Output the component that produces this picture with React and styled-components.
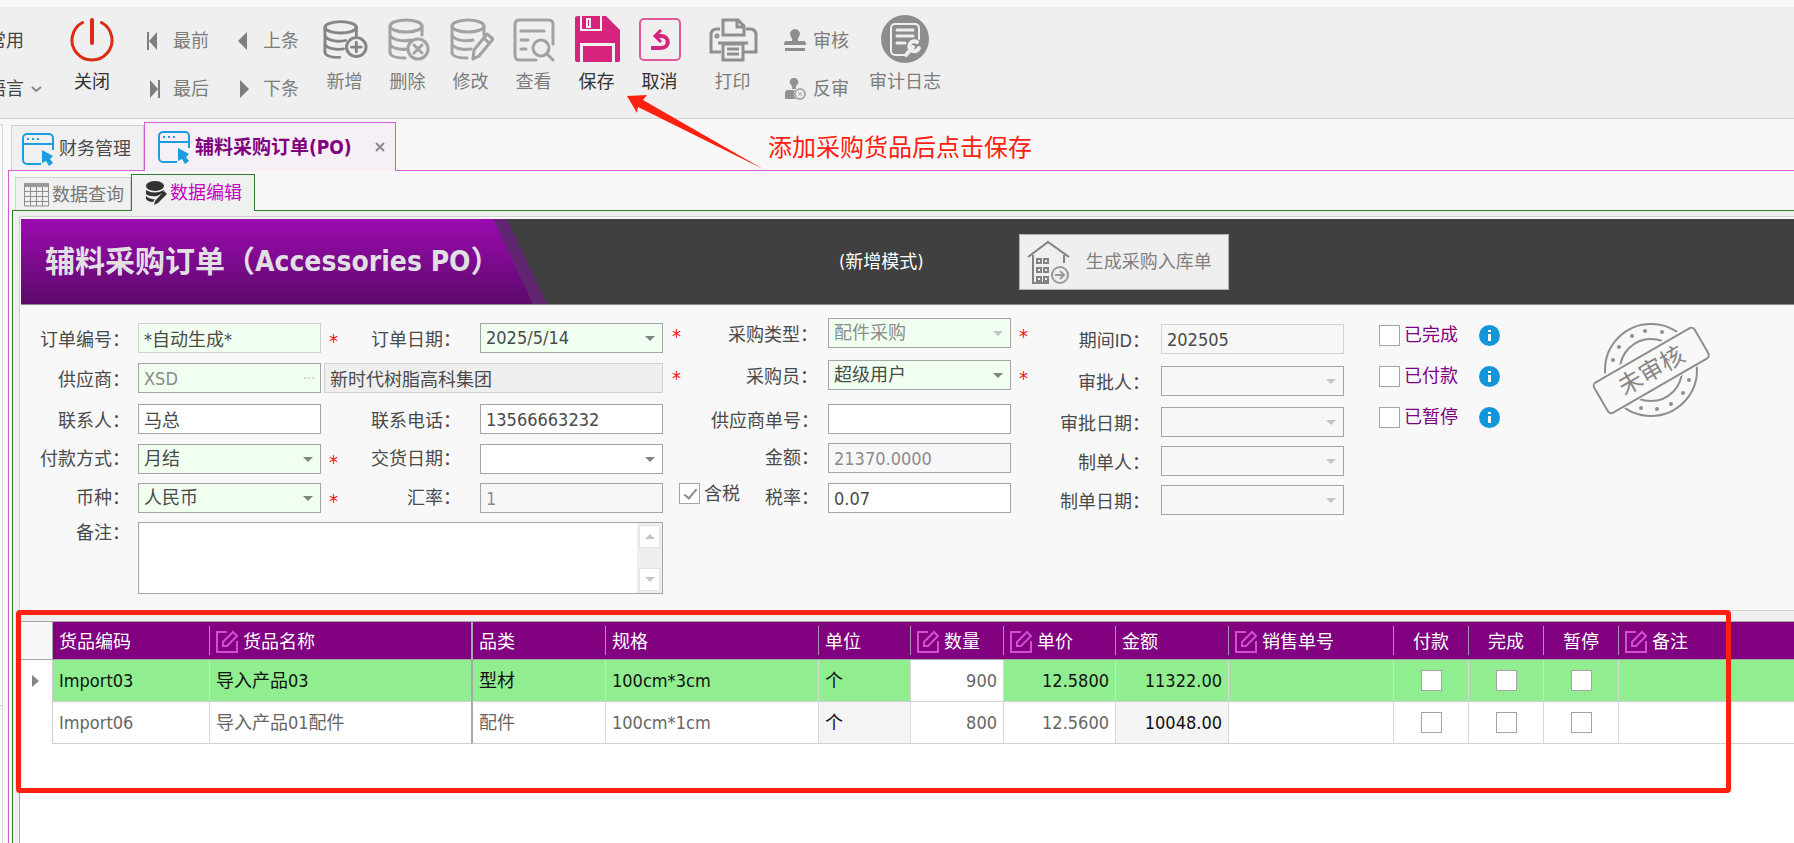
import styled, { createGlobalStyle, css } from 'styled-components';

const GlobalStyle = createGlobalStyle`
    * {
        box-sizing: border-box;
    }

    body {
        margin: 0;
        background: #f8f8f8;
    }

    body, button, input, select, textarea {
        font-family: "DejaVu Sans Condensed", "Noto Sans CJK SC", sans-serif;
        font-size: 18px;
        line-height: 20px;
        color: #4a4a4a;
    }

    button {
        padding: 0;
        border: 0;
        background: none;
    }
`

const Page = styled.div`
    position: relative;
    display: flex;
    flex-direction: column;
    min-height: 100vh;
    overflow: hidden;
`

/* ---------- toolbar ---------- */

const Toolbar = styled.header`
    display: flex;
    align-items: flex-start;
    height: 112px;
    margin-top: 7px;
    padding-top: 8px;
    background: #efefef;
    border-bottom: 1px solid #d0d0d0;
    white-space: nowrap;
`

const ToolColumn = styled.div`
    display: grid;
    grid-template-rows: 48px 48px;
    align-items: center;
    padding-top: 2px;
    flex: none;
    width: ${props => props.$width}px;
    margin-left: ${props => props.$before || 0}px;
`

const SmallTool = styled.button`
    display: flex;
    align-items: center;
    gap: ${props => props.$gap || 0}px;
    color: ${props => props.$active ? '#444' : '#7c7c7c'};

    svg {
        flex: none;
    }
`

const BigTool = styled.button`
    display: flex;
    flex-direction: column;
    align-items: center;
    gap: 9px;
    flex: none;
    width: ${props => props.$width || 63}px;
    margin-left: ${props => props.$before || 0}px;
    color: ${props => props.$active ? '#333' : '#7c7c7c'};

    svg {
        display: block;
        height: 48px;
    }
`

/* ---------- tabs ---------- */

const Body = styled.div`
    display: flex;
    flex: 1;
`

const LeftRail = styled.div`
    flex: none;
    width: 3px;
    margin: 5px 5px 0 0;
    border: 1px solid #d8d8d8;
    border-width: 1px 1px 0 0;

    &::before {
        content: '';
        display: block;
        height: 580px;
        border-bottom: 1px solid #d0d0d0;
    }
`

const Workspace = styled.main`
    display: flex;
    flex-direction: column;
    flex: 1;
    min-width: 0;
`

const TabBar = styled.nav`
    display: flex;
    align-items: flex-end;
    height: 51px;
    padding-left: 3px;
`

const Tab = styled.button`
    display: flex;
    align-items: center;
    gap: 5px;
    height: 45px;
    width: 133px;
    padding: 2px 0 0 9px;
    background: #f0f0f0;
    border: 1px solid #d0d0d0;
    border-bottom: 0;
    white-space: nowrap;

    ${props => props.$active && css`
        position: relative;
        height: 49px;
        width: 252px;
        margin-bottom: -1px;
        padding: 0 10px 0 12px;
        background: #f6f0f6;
        border-color: #d25fd2;
        color: #800080;
        font-size: 19px;
        font-weight: bold;
    `}
`

const CloseMark = styled.svg`
    margin-left: auto;
`

const TabPanel = styled.div`
    display: flex;
    flex-direction: column;
    flex: 1;
    padding-left: 3px;
    border: 1px solid #d25fd2;
    border-width: 1px 0 0 1px;
`

const SubTabBar = styled(TabBar)`
    height: 39px;
`

const SubTab = styled.button`
    display: flex;
    align-items: center;
    gap: 3px;
    height: 33px;
    width: 116px;
    padding: 1px 0 0 8px;
    background: #f0f0f0;
    border: 1px solid #d0d0d0;
    border-bottom: 0;
    color: #777;
    white-space: nowrap;

    ${props => props.$active && css`
        position: relative;
        height: 37px;
        width: 124px;
        margin-bottom: -1px;
        padding: 0 0 0 13px;
        background: #eef1ee;
        border-color: #2e7d32;
        color: #c800c8;
    `}
`

const SubPanel = styled.div`
    display: flex;
    flex-direction: column;
    flex: 1;
    padding: 5px 0 0 6px;
    background: #eef0ee;
    border: 1px solid #2e7d32;
    border-width: 1px 0 0 1px;
`

/* ---------- order form ---------- */

const FormPanel = styled.form`
    height: 395px;
    padding: 2px 0 0 1px;
    background: #f8f8f8;
    border: 1px solid #d0d0d0;
    border-right: 0;
`

const Banner = styled.div`
    display: flex;
    align-items: center;
    height: 86px;
    background: #404040;
    border-bottom: 1px solid #8a8a8a;
`

const TitlePlate = styled.div`
    flex: none;
    width: 526px;
    height: 100%;
    background: #602672;
    clip-path: polygon(0 0, calc(100% - 40px) 0, 100% 100%, 0 100%);
`

const Title = styled.h1`
    display: flex;
    align-items: center;
    width: 512px;
    height: 100%;
    margin: 0;
    padding-left: 24px;
    background: linear-gradient(#9b0bb0, #5c0a6a);
    clip-path: polygon(0 0, calc(100% - 40px) 0, 100% 100%, 0 100%);
    color: #e2dfe4;
    font-size: 30px;
    line-height: 40px;
    white-space: nowrap;

    span {
        font-size: 28px;
    }
`

const Mode = styled.span`
    margin-left: 292px;
    color: #fff;
    white-space: nowrap;
`

const StockInButton = styled.button`
    display: flex;
    align-items: center;
    gap: 16px;
    height: 56px;
    width: 210px;
    margin-left: 95px;
    padding-left: 7px;
    background: #efefef;
    border: 1px solid #b0b0b0;
    color: #808080;
    white-space: nowrap;
`

const FormBody = styled.div`
    display: flex;
    align-items: flex-start;
    white-space: nowrap;
`

const FieldGrid = styled.div`
    display: grid;
    flex: none;
    align-items: start;
    grid-template-columns: ${props => props.$columns};
    grid-template-rows: ${props => props.$rows};
    padding-top: ${props => props.$top}px;
`

const LabelCell = styled.div`
    display: flex;
    align-items: flex-start;
    justify-content: space-between;
    padding: 0 ${props => props.$after || 8}px 0 ${props => props.$before || 0}px;

    & > :only-child {
        margin-left: auto;
    }
`

const Label = styled.label`
    line-height: ${props => props.$line || 34}px;
`

const Required = styled.span`
    color: #ff1010;
    font-size: 20px;
    line-height: 36px;
`

const fieldBox = css`
    width: 100%;
    height: 30px;
    margin: 0;
    padding: 0 5px;
    border: 1px solid ${props => props.$soft ? '#d2d2d2' : '#a4a4a4'};
    border-radius: 0;
    background: ${props => props.$bg || '#fff'};
    color: ${props => props.$dim ? '#8c8c8c' : '#4a4a4a'};
    opacity: 1;
    outline: none;
`

const Input = styled.input`
    ${fieldBox}
`

const SelectBox = styled.div`
    position: relative;
    height: 30px;

    svg {
        position: absolute;
        right: 8px;
        top: 13px;
        pointer-events: none;
    }
`

const NativeSelect = styled.select`
    ${fieldBox}
    appearance: none;
`

const LookupBox = styled.div`
    position: relative;
    height: 30px;
`

const LookupButton = styled.button`
    position: absolute;
    right: 6px;
    top: 5px;
    color: #b8c4b8;
    font-size: 14px;
`

const SupplierName = styled.div`
    grid-column: 3 / 5;
    padding-left: 3px;
`

const Memo = styled.div`
    display: flex;
    grid-column: 2 / 5;
    height: 72px;
    background: #fff;
    border: 1px solid #a4a4a4;

    textarea {
        flex: 1;
        border: 0;
        padding: 4px 5px;
        resize: none;
        outline: none;
        background: transparent;
    }
`

const ScrollRail = styled.div`
    display: flex;
    flex-direction: column;
    justify-content: space-between;
    width: 25px;
    padding: 2px;
    background: #efefef;

    button {
        display: flex;
        align-items: center;
        justify-content: center;
        height: 23px;
        background: #fff;
        border: 1px solid #e3e3e3;
    }
`

const CheckInput = styled.input`
    appearance: none;
    position: relative;
    flex: none;
    width: 21px;
    height: 21px;
    margin: 0;
    background: #fff;
    border: 1px solid #a4a4a4;

    &:checked::after {
        content: '';
        position: absolute;
        left: 7px;
        top: 2px;
        width: 5px;
        height: 11px;
        border: solid #8a8a8a;
        border-width: 0 2px 2px 0;
        transform: rotate(40deg);
    }
`

const CheckLabel = styled.label`
    display: flex;
    align-items: center;
    gap: 4px;
    color: ${props => props.$color || '#4a4a4a'};
`

const StateList = styled.div`
    display: flex;
    flex-direction: column;
    gap: 19px;
    padding: 19px 0 0 35px;
`

const StateRow = styled.div`
    display: flex;
    align-items: center;
    gap: 21px;
    height: 22px;
`

const StampBox = styled.div`
    padding: 16px 0 0 90px;
`

/* ---------- goods grid ---------- */

const Splitter = styled.div`
    height: 10px;
    background: #efefef;
`

const GoodsPanel = styled.section`
    position: relative;
    flex: 1;
    background: #fff;
    border: 1px solid #a8a8a8;
    border-width: 1px 0 0 1px;
`

const Goods = styled.table`
    width: 100%;
    table-layout: fixed;
    border-collapse: separate;
    border-spacing: 0;
    white-space: nowrap;
`

const Head = styled.th`
    height: 38px;
    padding: 0;
    background: #800080;
    border-left: ${props => props.$split ? '2px solid #a8a8a8' : '0'};
    border-bottom: 1px solid #a8a8a8;
    color: #fff;
    font-weight: normal;
`

const HeadInner = styled.div`
    display: flex;
    align-items: center;
    justify-content: ${props => props.$center ? 'center' : 'flex-start'};
    gap: 4px;
    height: 29px;
    padding: 2px 0 0 6px;
    border-left: ${props => props.$line ? '1px solid #b090b0' : '0'};
    ${props => props.$center && 'padding-left: 0;'}
`

const Corner = styled.th`
    padding: 0;
    background: #f8f8f8;
    border: 1px solid #a8a8a8;
    border-width: 0 1px 1px 0;
`

const Marker = styled.td`
    height: 42px;
    padding: 0 0 0 12px;
    border-right: 1px solid #d0d0d0;
`

const Cell = styled.td`
    height: 42px;
    padding: 0 6px;
    text-align: ${props => props.$align || 'left'};
    border-bottom: 1px solid #d0d0d0;
    border-left: ${props => props.$split ? '2px solid #a8a8a8' : props.$first ? '0' : '1px solid #d8d8d8'};
    background: ${props => props.$bg};
    color: ${props => props.$color};

    ${CheckInput} {
        display: block;
        margin: 0 auto;
    }
`

/* ---------- notes drawn over the screen ---------- */

const NoteFrame = styled.div`
    position: absolute;
    top: -12px;
    left: -4px;
    right: 63px;
    height: 183px;
    border: 5px solid #ff2010;
    border-radius: 4px;
    pointer-events: none;
`

const NoteArrow = styled.svg`
    position: absolute;
    left: 627px;
    top: 95px;
    pointer-events: none;
`

const NoteText = styled.span`
    position: absolute;
    left: 768px;
    top: 133px;
    color: #ff2010;
    font-size: 24px;
    line-height: 30px;
    white-space: nowrap;
`

/* ---------- icons ---------- */

const PowerIcon = () => (
    <svg width="44" height="48" viewBox="0 0 44 48" fill="none" stroke="#dc2a14" strokeWidth="3" strokeLinecap="round">
        <path d="M12.5 7.5A20 20 0 1 0 31.5 7.5" />
        <path d="M22 5v23" strokeWidth="4" />
    </svg>
)

const StepIcon = ({ next, bar }) => (
    <svg width="14" height="20" viewBox="0 0 14 20" fill="#7e7e7e" overflow="visible">
        <g transform={next ? 'translate(17 0) scale(-1 1)' : undefined}>
            {bar && <path d="M2 1h2v18H2z" />}
            <path d={bar ? 'M12 1v18L4 10z' : 'M12 1v18L3 10z'} />
        </g>
    </svg>
)

const Cylinder = ({ children, light, transform }) => (
    <svg width="46" height="48" viewBox="0 0 46 48" fill="none" stroke={light ? '#a2a2a2' : '#858585'} strokeWidth="3" strokeLinecap="round">
        <g transform={transform}>
            <ellipse cx="18" cy="11" rx="16" ry="6" />
            <path d="M2 11v27c1 4 9 5 15 5M34 11v9M2 20c2 5 13 7 21 5M2 29c2 5 12 6 19 5" />
            {children}
        </g>
    </svg>
)

const AddIcon = () => (
    <Cylinder transform="translate(1 2) scale(0.98 0.94)">
        <circle cx="34" cy="32" r="10" fill="#efefef" />
        <path d="M34 27v10M29 32h10" />
    </Cylinder>
)

const DeleteIcon = () => (
    <Cylinder light transform="translate(3 0)">
        <circle cx="30" cy="34" r="10" fill="#efefef" />
        <path d="M26 30l8 8M34 30l-8 8" />
    </Cylinder>
)

const EditIcon = () => (
    <Cylinder light transform="translate(2 0)">
        <path d="M23 44l1-9 13-16 6 5-14 17z" fill="#efefef" strokeLinejoin="round" />
        <path d="M34 23l5 5" />
    </Cylinder>
)

const ViewIcon = () => (
    <svg width="42" height="48" viewBox="0 0 42 48" fill="none" stroke="#a2a2a2" strokeWidth="3" strokeLinecap="round">
        <path d="M23 45H6a4 4 0 0 1-4-4V9a4 4 0 0 1 4-4h30a4 4 0 0 1 4 4v20" />
        <path d="M8 16h23M8 25h7M8 34h5" />
        <circle cx="28" cy="33" r="8" />
        <path d="M34 39l6 6" />
    </svg>
)

const SaveIcon = () => (
    <svg width="46" height="48" viewBox="0 0 46 48" fill="#d6247d">
        <path d="M1 3q0-2 3-2h2v15h22V1h4l14 14v31q0 1-2 1h-3V28H6v19H3q-2 0-2-2z" />
        <path d="M8 1h18v13H8zM9 31h29v16H9z" />
        <path d="M13 4h3v8h-3z" fill="none" stroke="#efefef" strokeWidth="2" />
    </svg>
)

const CancelIcon = () => (
    <svg width="44" height="48" viewBox="0 0 44 48" fill="none" stroke="#e0589a" strokeWidth="2">
        <rect x="2" y="4" width="40" height="41" rx="4" />
        <path d="M13 33h10c9 0 9-12 0-12h-5" stroke="#d6247d" strokeWidth="4" />
        <path d="M23 15l-6 6 6 6" stroke="#d6247d" strokeWidth="3" />
    </svg>
)

const PrintIcon = () => (
    <svg width="50" height="48" viewBox="0 0 50 48" fill="none" stroke="#8f8f8f" strokeWidth="3">
        <path d="M13 37H3V20q0-6 6-6h3M38 14h4q6 0 6 6v17H36" />
        <path d="M15 20V5h15l6 6v9zM29 5v7h7" />
        <path d="M15 45V29h20v16zM10 28h30M19 34h12M19 39h12" />
        <circle cx="9" cy="21" r="1" />
    </svg>
)

const StampIcon = () => (
    <svg width="24" height="24" viewBox="0 0 24 24" fill="#8e8e8e">
        <path d="M12 0a5 5 0 0 1 4 8q-2 2-1 4h6q2 0 2 4H1q0-4 2-4h6q1-2-1-4a5 5 0 0 1 4-8zM2 19h20v3H2z" />
    </svg>
)

const UnstampIcon = () => (
    <svg width="24" height="24" viewBox="0 0 24 24" fill="#929292">
        <path d="M11 1a4 4 0 0 1 3 7q-2 2-1 4h-4q1-2-1-4a4 4 0 0 1 3-7zM2 16q0-3 3-3h7a7 7 0 0 0 1 9H2z" />
        <circle cx="17" cy="17" r="5" fill="none" stroke="#a8a8a8" strokeWidth="2" />
        <path d="M15 15l4 4M19 15l-4 4" stroke="#a8a8a8" strokeWidth="1" />
    </svg>
)

const AuditLogIcon = () => (
    <svg width="48" height="48" viewBox="0 0 48 48" fill="none" stroke="#efefef" strokeWidth="2" strokeLinecap="round">
        <circle cx="24" cy="24" r="24" fill="#8d8d8d" stroke="none" />
        <path d="M23 40H14a4 4 0 0 1-4-4V13a4 4 0 0 1 4-4h20a4 4 0 0 1 4 4v11" />
        <path d="M16 15h16M16 21h16M16 28h8" strokeWidth="3" />
        <path d="M25 40l7-8" strokeWidth="4" />
        <path d="M36 27a5 5 0 1 0 2 6" strokeWidth="4" />
    </svg>
)

const WindowIcon = () => (
    <svg width="33" height="34" viewBox="0 0 33 34" fill="none" stroke="#1b9de0" strokeWidth="2">
        <path d="M20 32H6a4 4 0 0 1-4-4V6a4 4 0 0 1 4-4h22a4 4 0 0 1 4 4v12M2 12h30" />
        <path d="M6 7h2M11 7h2M16 7h2" />
        <path d="M21 18l11 6-3 3 3 4-4 3-3-5-4 2z" fill="#1b9de0" stroke="none" />
    </svg>
)

const GridIcon = () => (
    <svg width="25" height="24" viewBox="0 0 25 24" fill="none" stroke="#8f8f8f" strokeWidth="1">
        <path d="M0 0h25v4H0z" fill="#999" stroke="none" />
        <path d="M0.500 1v22h24V1M6.500 4v19M12.500 4v19M18.500 4v19M0 8.500h25M0 13.500h25M0 18.500h25" />
    </svg>
)

const DataEditIcon = () => (
    <svg width="22" height="25" viewBox="0 0 22 25" fill="#333">
        <ellipse cx="10" cy="5" rx="9" ry="5" />
        <path d="M1 9q8 5 18 0l-1 3-6 3Q4 16 1 13zM1 15q4 4 9 3l-2 3q-5 0-7-3z" />
        <path d="M10 20L19 10l3 3-9 9-4 2z" />
    </svg>
)

const WarehouseIcon = () => (
    <svg width="43" height="44" viewBox="0 0 43 44" fill="none" stroke="#828282" strokeWidth="2">
        <path d="M1 17L21 2l21 15" />
        <path d="M6 15v28h16M37 15v8" />
        <path d="M10 19h4v4h-4zM17 19h4v4h-4zM10 28h4v4h-4zM17 28h4v4h-4zM10 37h4v4h-4zM17 37h4v4h-4z" />
        <circle cx="33" cy="35" r="8" stroke="#999" />
        <path d="M28 35h9M33 31l4 4-4 4" stroke="#999" />
    </svg>
)

const InfoIcon = () => (
    <svg width="21" height="21" viewBox="0 0 21 21">
        <circle cx="10.500" cy="10.500" r="10.500" fill="#1296db" />
        <path d="M9 5h3v2H9zM9 9h3v7H9z" fill="#fff" />
    </svg>
)

const Caret = ({ dim, up }) => (
    <svg width="10" height="5" viewBox="0 0 10 5" fill={dim ? '#c4c4c4' : '#848484'}>
        <path d={up ? 'M0 5L5 0l5 5z' : 'M0 0h10L5 5z'} />
    </svg>
)

const PenIcon = () => (
    <svg width="23" height="23" viewBox="0 0 23 23" fill="none" stroke="#d050d0" strokeWidth="2">
        <path d="M11 2H1v20h20V11" />
        <path d="M7 16v-4L17 2l4 4-10 10z" />
    </svg>
)

const dots = [[-38, -10], [-32, -23], [-19, -34], [-6, -39], [11, -38], [38, 10], [32, 23], [20, 34], [6, 39], [-10, 38]]

const AuditStamp = () => (
    <svg width="122" height="98" viewBox="-61 -49 122 98" fill="none" stroke="#8e8e8e" strokeWidth="2">
        <circle r="46" />
        <circle r="31" />
        {dots.map(([x, y]) => <circle key={x} cx={x} cy={y} r="2" fill="#8e8e8e" stroke="none" />)}
        <g transform="rotate(-30)">
            <rect x="-61" y="-20" width="122" height="40" fill="#f8f8f8" stroke="none" />
            <rect x="-58" y="-17" width="116" height="35" rx="4" fill="#f8f8f8" />
            <text x="0" y="9" textAnchor="middle" fill="#8a8585" stroke="none" fontSize="24">未审核</text>
        </g>
    </svg>
)

/* ---------- parts ---------- */

const GREEN = '#f0fff0'
const GREY = '#f7f7f7'

function Select({ id, value, bg, dim, disabled }) {
    return (
        <SelectBox>
            <NativeSelect id={id} $bg={bg} $dim={dim} disabled={disabled} defaultValue={value}>
                <option>{value}</option>
            </NativeSelect>
            <Caret dim={disabled} />
        </SelectBox>
    )
}

const columns = [
    { title: '货品编码', width: 156 },
    { title: '货品名称', width: 262, pen: true },
    { title: '品类', width: 134, split: true },
    { title: '规格', width: 213 },
    { title: '单位', width: 92 },
    { title: '数量', width: 93, pen: true },
    { title: '单价', width: 112, pen: true },
    { title: '金额', width: 113 },
    { title: '销售单号', width: 165, pen: true },
    { title: '付款', width: 75, check: true },
    { title: '完成', width: 75, check: true },
    { title: '暂停', width: 75, check: true },
    { title: '备注', pen: true },
]

const goods = [
    { selected: true, values: ['Import03', '导入产品03', '型材', '100cm*3cm', '个', '900', '12.5800', '11322.00', ''] },
    { selected: false, values: ['Import06', '导入产品01配件', '配件', '100cm*1cm', '个', '800', '12.5600', '10048.00', ''] },
]

function cellBackground(selected, i) {
    if (selected) return i === 5 ? '#fff' : '#90ee90'
    return i === 4 || i === 7 ? '#f4f4f4' : '#fff'
}

function cellColor(selected, i) {
    if (selected) return i === 5 ? '#666' : '#111'
    return i === 4 || i === 7 ? '#111' : '#666'
}

function GoodsTable() {
    return (
        <Goods>
            <colgroup>
                <col style={{ width: 33 }} />
                {columns.map(c => <col key={c.title} style={{ width: c.width }} />)}
            </colgroup>
            <thead>
                <tr>
                    <Corner />
                    {columns.map((c, i) => (
                        <Head key={c.title} $split={c.split}>
                            <HeadInner $line={i > 0 && !c.split} $center={c.check}>
                                {c.pen && <PenIcon />}
                                {c.title}
                            </HeadInner>
                        </Head>
                    ))}
                </tr>
            </thead>
            <tbody>
                {goods.map(({ selected, values }) => (
                    <tr key={values[0]}>
                        <Marker>
                            {selected && (
                                <svg width="7" height="12" viewBox="0 0 7 12" fill="#848484"><path d="M0 0l7 6-7 6z" /></svg>
                            )}
                        </Marker>
                        {columns.map((c, i) => (
                            <Cell
                                key={c.title}
                                $first={i === 0}
                                $split={c.split}
                                $align={i >= 5 && i <= 7 ? 'right' : 'left'}
                                $bg={cellBackground(selected, i)}
                                $color={cellColor(selected, i)}
                            >
                                {c.check ? <CheckInput type="checkbox" aria-label={c.title} /> : values[i]}
                            </Cell>
                        ))}
                    </tr>
                ))}
            </tbody>
        </Goods>
    )
}

function MainToolbar() {
    return (
        <Toolbar>
            <ToolColumn $width={74} $before={-12}>
                <SmallTool $active>常用</SmallTool>
                <SmallTool $active $gap={7}>
                    语言
                    <svg width="11" height="7" viewBox="0 0 11 7" fill="none" stroke="#888" strokeWidth="2"><path d="M1 1l4 4 5-4" /></svg>
                </SmallTool>
            </ToolColumn>
            <BigTool $width={60} $active><PowerIcon />关闭</BigTool>
            <ToolColumn $width={91} $before={23}>
                <SmallTool $gap={14}><StepIcon bar />最前</SmallTool>
                <SmallTool $gap={14}><StepIcon bar next />最后</SmallTool>
            </ToolColumn>
            <ToolColumn $width={77} $before={-1}>
                <SmallTool $gap={14}><StepIcon />上条</SmallTool>
                <SmallTool $gap={14}><StepIcon next />下条</SmallTool>
            </ToolColumn>
            <BigTool $before={1}><AddIcon />新增</BigTool>
            <BigTool><DeleteIcon />删除</BigTool>
            <BigTool><EditIcon />修改</BigTool>
            <BigTool><ViewIcon />查看</BigTool>
            <BigTool $active><SaveIcon />保存</BigTool>
            <BigTool $active><CancelIcon />取消</BigTool>
            <BigTool $before={10}><PrintIcon />打印</BigTool>
            <ToolColumn $width={67} $before={19}>
                <SmallTool $gap={6}><StampIcon />审核</SmallTool>
                <SmallTool $gap={6}><UnstampIcon />反审</SmallTool>
            </ToolColumn>
            <BigTool $width={72} $before={19}><AuditLogIcon />审计日志</BigTool>
        </Toolbar>
    )
}

function OrderForm() {
    return (
        <FormPanel onSubmit={e => e.preventDefault()}>
            <Banner>
                <TitlePlate>
                    <Title>辅料采购订单（<span>Accessories PO</span>）</Title>
                </TitlePlate>
                <Mode>(新增模式)</Mode>
                <StockInButton type="button"><WarehouseIcon />生成采购入库单</StockInButton>
            </Banner>
            <FormBody>
                <FieldGrid $top={18} $columns="117px 183px 159px 183px" $rows="40px 41px 40px 39px 39px 72px">
                    <LabelCell><Label htmlFor="orderNo">订单编号：</Label></LabelCell>
                    <Input id="orderNo" defaultValue="*自动生成*" $bg={GREEN} $soft readOnly />
                    <LabelCell $before={8} $after={19}><Required>*</Required><Label htmlFor="orderDate">订单日期：</Label></LabelCell>
                    <Select id="orderDate" value="2025/5/14" bg={GREEN} />

                    <LabelCell><Label htmlFor="supplier">供应商：</Label></LabelCell>
                    <LookupBox>
                        <Input id="supplier" defaultValue="XSD" $bg={GREEN} $dim readOnly />
                        <LookupButton type="button">···</LookupButton>
                    </LookupBox>
                    <SupplierName>
                        <Input aria-label="供应商" defaultValue="新时代树脂高科集团" $bg="#efefef" $soft readOnly />
                    </SupplierName>

                    <LabelCell><Label htmlFor="contact">联系人：</Label></LabelCell>
                    <Input id="contact" defaultValue="马总" />
                    <LabelCell $after={19}><Label htmlFor="phone">联系电话：</Label></LabelCell>
                    <Input id="phone" defaultValue="13566663232" />

                    <LabelCell><Label htmlFor="payment" $line={30}>付款方式：</Label></LabelCell>
                    <Select id="payment" value="月结" bg={GREEN} />
                    <LabelCell $before={8} $after={19}><Required>*</Required><Label htmlFor="delivery" $line={30}>交货日期：</Label></LabelCell>
                    <Select id="delivery" value="" />

                    <LabelCell><Label htmlFor="currency" $line={30}>币种：</Label></LabelCell>
                    <Select id="currency" value="人民币" bg={GREEN} />
                    <LabelCell $before={8} $after={19}><Required>*</Required><Label htmlFor="rate" $line={30}>汇率：</Label></LabelCell>
                    <Input id="rate" defaultValue="1" $bg={GREY} $dim readOnly />

                    <LabelCell><Label htmlFor="memo" $line={22}>备注：</Label></LabelCell>
                    <Memo>
                        <textarea id="memo" />
                        <ScrollRail>
                            <button type="button" aria-label="up"><Caret dim up /></button>
                            <button type="button" aria-label="down"><Caret dim /></button>
                        </ScrollRail>
                    </Memo>
                </FieldGrid>

                <FieldGrid $top={13} $columns="165px 183px 17px" $rows="42px 44px 39px 40px 30px">
                    <LabelCell $before={9} $after={10}><Required>*</Required><Label htmlFor="kind">采购类型：</Label></LabelCell>
                    <Select id="kind" value="配件采购" bg={GREEN} dim disabled />
                    <LabelCell $before={8} $after={1}><Required>*</Required></LabelCell>

                    <LabelCell $before={9} $after={10}><Required>*</Required><Label htmlFor="buyer">采购员：</Label></LabelCell>
                    <Select id="buyer" value="超级用户" bg={GREEN} />
                    <LabelCell $before={8} $after={1}><Required>*</Required></LabelCell>

                    <LabelCell $after={9}><Label htmlFor="supplierNo">供应商单号：</Label></LabelCell>
                    <Input id="supplierNo" />
                    <span />

                    <LabelCell $after={9}><Label htmlFor="amount" $line={30}>金额：</Label></LabelCell>
                    <Input id="amount" defaultValue="21370.0000" $bg={GREY} $dim readOnly />
                    <span />

                    <LabelCell $before={16} $after={9}>
                        <CheckLabel><CheckInput type="checkbox" defaultChecked />含税</CheckLabel>
                        <Label htmlFor="tax" $line={30}>税率：</Label>
                    </LabelCell>
                    <Input id="tax" defaultValue="0.07" />
                </FieldGrid>

                <FieldGrid $top={19} $columns="133px 183px" $rows="42px 41px 39px 39px 30px">
                    <LabelCell $after={11}><Label htmlFor="period">期间ID：</Label></LabelCell>
                    <Input id="period" defaultValue="202505" $bg={GREY} $soft readOnly />
                    <LabelCell $after={11}><Label htmlFor="approver">审批人：</Label></LabelCell>
                    <Select id="approver" value="" bg={GREY} disabled />
                    <LabelCell $after={11}><Label htmlFor="approveDate">审批日期：</Label></LabelCell>
                    <Select id="approveDate" value="" bg={GREY} disabled />
                    <LabelCell $after={11}><Label htmlFor="maker">制单人：</Label></LabelCell>
                    <Select id="maker" value="" bg={GREY} disabled />
                    <LabelCell $after={11}><Label htmlFor="makeDate">制单日期：</Label></LabelCell>
                    <Select id="makeDate" value="" bg={GREY} disabled />
                </FieldGrid>

                <StateList>
                    {['已完成', '已付款', '已暂停'].map(name => (
                        <StateRow key={name}>
                            <CheckLabel $color="#800080"><CheckInput type="checkbox" />{name}</CheckLabel>
                            <InfoIcon />
                        </StateRow>
                    ))}
                </StateList>
                <StampBox><AuditStamp /></StampBox>
            </FormBody>
        </FormPanel>
    )
}

export default function App() {
    return (
        <Page>
            <GlobalStyle />
            <MainToolbar />
            <Body>
                <LeftRail />
                <Workspace>
                    <TabBar>
                        <Tab><WindowIcon />财务管理</Tab>
                        <Tab $active>
                            <WindowIcon />
                            辅料采购订单(PO)
                            <CloseMark width="10" height="10" viewBox="0 0 10 10" stroke="#8a8a8a" strokeWidth="2"><path d="M1 1l8 8M9 1l-8 8" /></CloseMark>
                        </Tab>
                    </TabBar>
                    <TabPanel>
                        <SubTabBar as="div">
                            <SubTab><GridIcon />数据查询</SubTab>
                            <SubTab $active><DataEditIcon />数据编辑</SubTab>
                        </SubTabBar>
                        <SubPanel>
                            <OrderForm />
                            <Splitter />
                            <GoodsPanel>
                                <GoodsTable />
                                <NoteFrame />
                            </GoodsPanel>
                        </SubPanel>
                    </TabPanel>
                </Workspace>
            </Body>
            <NoteArrow width="137" height="75" viewBox="0 0 137 75" fill="#ff2010">
                <path d="M0 1L20 0l-4 5L136 74 11 12l-1 6z" />
            </NoteArrow>
            <NoteText>添加采购货品后点击保存</NoteText>
        </Page>
    )
}
